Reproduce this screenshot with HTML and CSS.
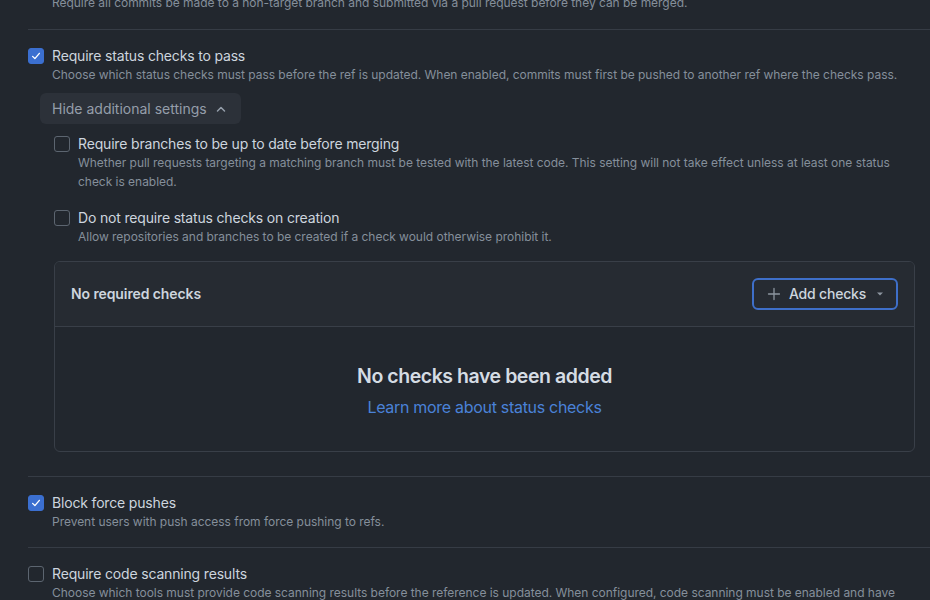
FILE: index.html
```html
<!DOCTYPE html>
<html lang="en">
<head>
    <meta charset="UTF-8">
    <meta name="viewport" content="width=device-width, initial-scale=1.0">
    <title>Branch protection rule</title>
    <link rel="stylesheet" href="styles.css">
</head>
<body>
    <div class="rules">
        <!-- Previous rule, only its description is in view -->
        <div class="rule rule-first">
            <span class="check-spacer"></span>
            <div class="rule-body">
                <p class="rule-desc">Require all commits be made to a non-target branch and submitted via a pull request before they can be merged.</p>
            </div>
        </div>

        <div class="rule">
            <span class="checkbox checked">
                <svg viewBox="0 0 16 16" width="12" height="12"><path d="M3.5 8.5l3 3 6-7" fill="none" stroke="#fff" stroke-width="1.8" stroke-linecap="round" stroke-linejoin="round"/></svg>
            </span>
            <div class="rule-body">
                <div class="rule-title">Require status checks to pass</div>
                <p class="rule-desc">Choose which status checks must pass before the ref is updated. When enabled, commits must first be pushed to another ref where the checks pass.</p>

                <button class="toggle-btn" type="button">
                    Hide additional settings
                    <svg viewBox="0 0 16 16" width="16" height="16"><path d="M4.5 10l3.5-3.5 3.5 3.5" fill="none" stroke="currentColor" stroke-width="1.5" stroke-linecap="round" stroke-linejoin="round"/></svg>
                </button>

                <div class="sub-rules">
                    <div class="sub-rule">
                        <span class="checkbox"></span>
                        <div class="rule-body">
                            <div class="rule-title">Require branches to be up to date before merging</div>
                            <p class="rule-desc">Whether pull requests targeting a matching branch must be tested with the latest code. This setting will not take effect unless at least one status check is enabled.</p>
                        </div>
                    </div>
                    <div class="sub-rule">
                        <span class="checkbox"></span>
                        <div class="rule-body">
                            <div class="rule-title">Do not require status checks on creation</div>
                            <p class="rule-desc">Allow repositories and branches to be created if a check would otherwise prohibit it.</p>
                        </div>
                    </div>
                </div>

                <div class="checks-box">
                    <div class="checks-header">
                        <span class="checks-heading">No required checks</span>
                        <button class="add-btn" type="button">
                            <svg class="plus" viewBox="0 0 16 16" width="16" height="16"><path d="M8 2.5v11M2.5 8h11" fill="none" stroke="currentColor" stroke-width="1.3" stroke-linecap="round"/></svg>
                            <span>Add checks</span>
                            <svg class="caret" viewBox="0 0 16 16" width="16" height="16"><path d="M5 6.5h6L8 9.5z" fill="currentColor"/></svg>
                        </button>
                    </div>
                    <div class="checks-empty">
                        <h3>No checks have been added</h3>
                        <a href="#">Learn more about status checks</a>
                    </div>
                </div>
            </div>
        </div>

        <div class="rule">
            <span class="checkbox checked">
                <svg viewBox="0 0 16 16" width="12" height="12"><path d="M3.5 8.5l3 3 6-7" fill="none" stroke="#fff" stroke-width="1.8" stroke-linecap="round" stroke-linejoin="round"/></svg>
            </span>
            <div class="rule-body">
                <div class="rule-title">Block force pushes</div>
                <p class="rule-desc">Prevent users with push access from force pushing to refs.</p>
            </div>
        </div>

        <div class="rule">
            <span class="checkbox"></span>
            <div class="rule-body">
                <div class="rule-title">Require code scanning results</div>
                <p class="rule-desc">Choose which tools must provide code scanning results before the reference is updated. When configured, code scanning must be enabled and have results for both the commit and the reference being updated.</p>
            </div>
        </div>
    </div>
</body>
</html>
```

FILE: styles.css
```css
body {
    margin: 0;
    background-color: #22272e;
    color: #cdd5de;
    font-family: Inter, "Noto Sans", sans-serif;
    font-size: 14px;
    overflow: hidden;
}

.rules {
    padding-left: 28px;
    margin-top: -6px;
}

.rule {
    display: flex;
    gap: 8px;
    padding: 16px 0;
    border-top: 1px solid #363c45;
}

.rule-first {
    border-top: none;
    padding-top: 0;
}

.check-spacer {
    width: 16px;
    flex-shrink: 0;
}

.rule-body {
    flex: 1;
    min-width: 0;
}

.rule-title {
    line-height: 20px;
    letter-spacing: -0.17px;
    color: #cdd5de;
}

.rule-desc {
    margin: 0;
    font-size: 12px;
    line-height: 18.5px;
    letter-spacing: -0.03px;
    color: #858f9b;
    padding-right: 20px;
}

.checkbox {
    width: 16px;
    height: 16px;
    flex-shrink: 0;
    margin-top: 2px;
    box-sizing: border-box;
    border: 1px solid #5c6570;
    border-radius: 3px;
    display: flex;
    align-items: center;
    justify-content: center;
}

.checkbox.checked {
    background-color: #3b6fd0;
    border-color: #3b6fd0;
}

.toggle-btn {
    display: flex;
    align-items: center;
    gap: 6px;
    height: 31px;
    margin: 9px 0 0 -12px;
    padding: 0 12px 0 12px;
    border: none;
    border-radius: 6px;
    background-color: #2c3139;
    color: #959eaa;
    font-family: inherit;
    font-size: 14px;
}

.sub-rules {
    padding-left: 2px;
    padding-top: 10px;
}

.sub-rule {
    display: flex;
    gap: 8px;
    margin-bottom: 17px;
}

.sub-rule:last-child {
    margin-bottom: 14px;
}

.checks-box {
    margin: 0 15px 8px 2px;
    border: 1px solid #393f48;
    border-radius: 6px;
    overflow: hidden;
}

.checks-header {
    display: flex;
    justify-content: space-between;
    align-items: center;
    padding: 16px;
    background-color: #262b32;
    border-bottom: 1px solid #393f48;
}

.checks-heading {
    font-weight: 600;
    letter-spacing: -0.1px;
    color: #cdd5de;
}

.add-btn {
    display: flex;
    align-items: center;
    height: 32px;
    padding: 0 8px 0 12px;
    box-sizing: border-box;
    border: 2px solid #3e6fc9;
    border-radius: 6px;
    background-color: #262b32;
    color: #cdd5de;
    font-family: inherit;
    font-size: 14px;
    font-weight: 500;
    letter-spacing: -0.2px;
}

.add-btn .plus {
    color: #8d96a0;
    margin-right: 7px;
}

.add-btn .caret {
    color: #8d96a0;
    margin-left: 6px;
}

.checks-empty {
    text-align: center;
    padding: 34px 16px 32px;
}

.checks-empty h3 {
    margin: 0 0 4px;
    font-size: 19.5px;
    line-height: 30px;
    font-weight: 600;
    letter-spacing: -0.45px;
    color: #d5dce4;
}

.checks-empty a {
    font-size: 16px;
    line-height: 24px;
    letter-spacing: -0.3px;
    color: #4a82d8;
    text-decoration: none;
}
```
